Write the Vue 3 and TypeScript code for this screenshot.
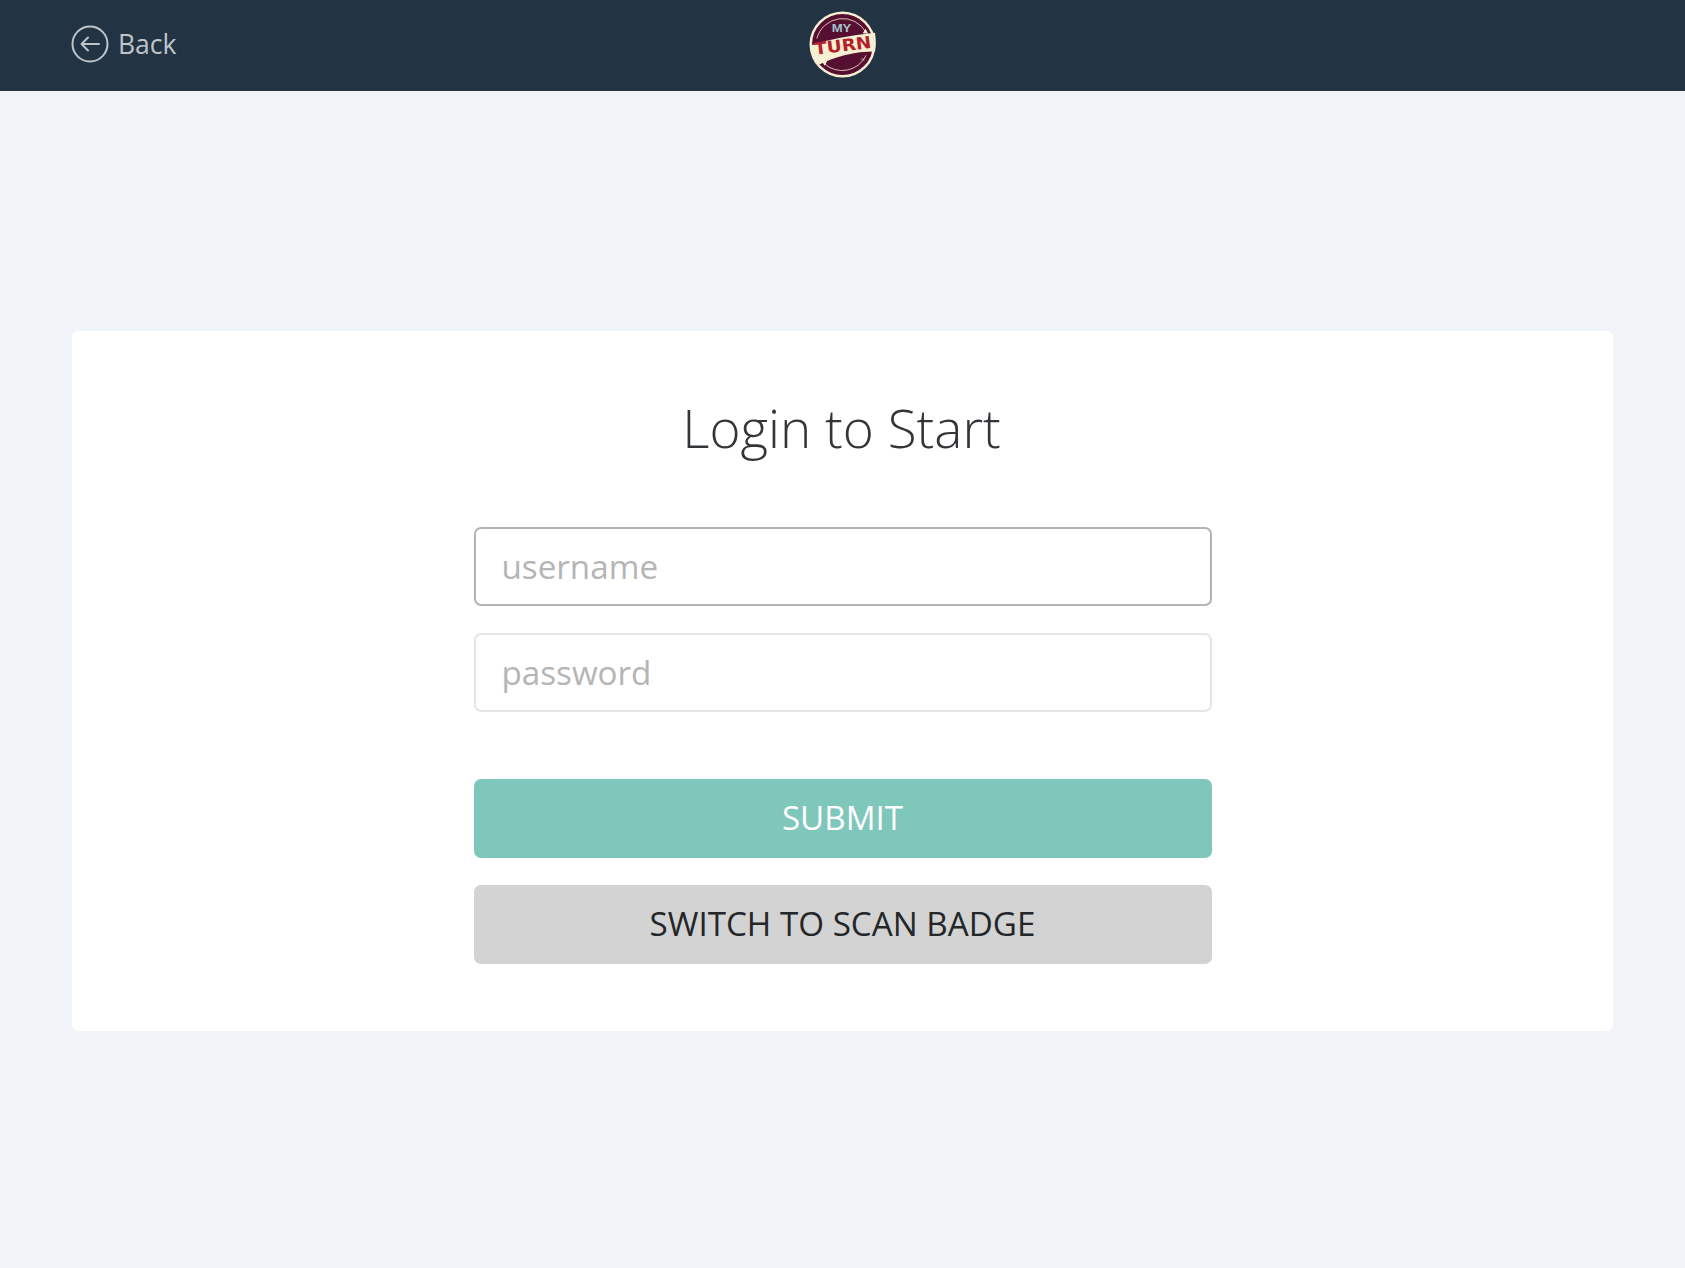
<template>
  <div class="page">
    <header class="topbar">
      <a class="back" href="#">
        <svg class="back-icon" viewBox="0 0 38 38" aria-hidden="true">
          <circle cx="19" cy="19" r="17.5" />
          <path d="M28 19H10.5M17 12.5l-6.5 6.5 6.5 6.5" />
        </svg>
        <span>Back</span>
      </a>
      <svg class="logo" viewBox="0 0 68 68" role="img" aria-label="My Turn">
        <circle cx="34" cy="34" r="33.5" fill="#f7efd2" />
        <circle cx="34" cy="34" r="31" fill="#560e31" />
        <path d="M8 28A27 27 0 0 1 58 22" class="logo-arc" />
        <path d="M58 45A27 27 0 0 1 15 53" class="logo-arc" />
        <path d="M60 23l-5.5-.5 3-4.5zM13 51l5.500-.5-2.500 5z" fill="#f7efd2" />
        <path d="M1 35Q28 26 67 22Q68.500 32 67 41Q36 41 9 55Q2 45 1 35Z" fill="#f7efd2" />
        <text x="23" y="21.5" class="logo-my" textLength="20" lengthAdjust="spacingAndGlyphs">MY</text>
        <text x="6" y="41" class="logo-turn" textLength="58" lengthAdjust="spacingAndGlyphs" transform="rotate(-7 35 41)">TURN</text>
        <text x="52" y="50.5" class="logo-tm">TM</text>
      </svg>
    </header>

    <main class="content">
      <section class="card">
        <h1>Login to Start</h1>
        <form class="form" @submit.prevent>
          <input class="field focused" type="text" placeholder="username" />
          <input class="field" type="password" placeholder="password" />
          <button class="btn primary" type="submit">SUBMIT</button>
          <button class="btn secondary" type="button">SWITCH TO SCAN BADGE</button>
        </form>
      </section>
    </main>
  </div>
</template>

<script setup lang="ts">
</script>

<style>
html,
body {
  margin: 0;
  background: #f0f3f7;
}
</style>

<style scoped>
.page {
  min-height: 1268px;
  background: #f0f3f7;
  font-family: "Open Sans", "Noto Sans", sans-serif;
}
.topbar {
  position: relative;
  display: flex;
  align-items: center;
  justify-content: center;
  height: 91px;
  background: #223343;
}
.back {
  position: absolute;
  left: 71px;
  top: 25px;
  display: flex;
  align-items: center;
  gap: 9px;
  color: #bfc4cb;
  font-size: 26.5px;
  line-height: 38px;
  text-decoration: none;
}
.back-icon {
  width: 38px;
  height: 38px;
  fill: none;
  stroke: #bfc4cb;
  stroke-width: 2;
  stroke-linecap: round;
  stroke-linejoin: round;
}
.logo {
  width: 67px;
  height: 67px;
  margin-top: -3px;
}
.logo-arc {
  fill: none;
  stroke: #f7efd2;
  stroke-width: 0.8;
}
.logo-my {
  fill: #a3c4c8;
  font-family: "Liberation Sans", sans-serif;
  font-size: 12px;
  font-weight: 700;
}
.logo-turn {
  fill: #b3202c;
  font-family: "DejaVu Sans", sans-serif;
  font-size: 17px;
  font-weight: 700;
}
.logo-tm {
  fill: #c9b9a8;
  font-family: "Liberation Sans", sans-serif;
  font-size: 3px;
}
.content {
  padding: 240px 72px 0;
}
.card {
  height: 700px;
  box-sizing: border-box;
  padding-top: 61px;
  background: #fff;
  border-radius: 6px;
}
h1 {
  margin: 0 0 63px;
  color: #333639;
  font-size: 53px;
  font-weight: 300;
  line-height: 72px;
  text-align: center;
  transform: translateX(-1px);
}
.form {
  display: flex;
  flex-direction: column;
  width: 738px;
  margin: 0 auto;
}
.field {
  box-sizing: border-box;
  height: 79px;
  margin-bottom: 27px;
  padding: 0 26px;
  background: #fff;
  border: 2px solid #e6e6e6;
  border-radius: 7px;
  color: #333;
  font: 400 33.2px "Open Sans", sans-serif;
  outline: none;
}
.field.focused {
  border-color: #b3b3b3;
}
.field::placeholder {
  color: #b5b5b5;
  opacity: 1;
}
.btn {
  height: 79px;
  padding: 0 0 2px;
  border: none;
  border-radius: 7px;
  font: 400 33.2px "Open Sans", sans-serif;
}
.primary {
  margin: 40px 0 27px;
  background: #7fc6bb;
  color: #fff;
}
.secondary {
  background: #d3d3d3;
  color: #242628;
}
</style>
